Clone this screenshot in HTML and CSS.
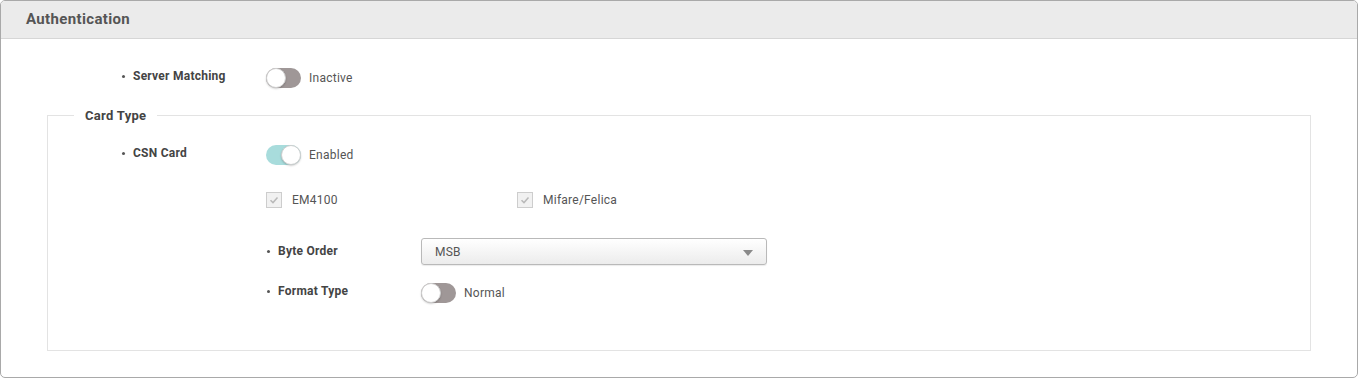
FILE: index.html
```html
<!DOCTYPE html>
<html>
<head>
<meta charset="utf-8">
<link rel="stylesheet" href="styles.css">
</head>
<body>
<div class="panel">
  <div class="panel-head">Authentication</div>
  <div class="panel-body">
    <div class="row row-top">
      <span class="label">Server Matching</span>
      <span class="switch off"><span class="knob"></span></span>
      <span class="val">Inactive</span>
    </div>
    <fieldset class="group">
      <legend>Card Type</legend>
      <div class="row row-csn">
        <span class="label">CSN Card</span>
        <span class="switch on"><span class="knob"></span></span>
        <span class="val">Enabled</span>
      </div>
      <div class="checks">
        <span class="check"><span class="box"><svg width="14" height="14" viewBox="0 0 14 14"><polyline points="3.5,7.2 6,9.6 10.5,4.6" fill="none" stroke="#b9b9b9" stroke-width="1.5"/></svg></span><span class="val">EM4100</span></span>
        <span class="check"><span class="box"><svg width="14" height="14" viewBox="0 0 14 14"><polyline points="3.5,7.2 6,9.6 10.5,4.6" fill="none" stroke="#b9b9b9" stroke-width="1.5"/></svg></span><span class="val">Mifare/Felica</span></span>
      </div>
      <div class="sub">
        <div class="subrow subrow-select">
          <span class="label sublabel">Byte Order</span>
          <span class="select"><span class="sel-text">MSB</span><span class="arrow"></span></span>
        </div>
        <div class="subrow subrow-format">
          <span class="label sublabel">Format Type</span>
          <span class="switch off"><span class="knob"></span></span>
          <span class="val">Normal</span>
        </div>
      </div>
    </fieldset>
  </div>
</div>
</body>
</html>
```
FILE: styles.css
```css
* { box-sizing: border-box; }
html, body { margin: 0; padding: 0; background: #fff; }
body { font-family: Roboto, "Liberation Sans", sans-serif; }

.panel {
  width: 1358px;
  border: 1px solid #a9a9a9;
  border-radius: 5px;
  overflow: hidden;
  background: #fff;
}
.panel-head {
  height: 38px;
  line-height: 36px;
  padding-left: 25px;
  background: #ebebeb;
  border-bottom: 1px solid #d6d6d6;
  font-size: 15px;
  font-weight: 700;
  letter-spacing: 0.35px;
  color: #555;
}
.panel-body {
  padding: 29px 46px 26px 46px;
}

.row { display: flex; align-items: flex-start; }
.row-top { margin-left: 74px; }
.label {
  display: flex;
  align-items: center;
  width: 145px;
  flex: none;
  font-size: 12px;
  font-weight: 700;
  line-height: 17px;
  letter-spacing: 0.25px;
  color: #444;
}
.label::before {
  content: "";
  width: 3px;
  height: 3px;
  border-radius: 50%;
  background: #555;
  margin: 0 8px 0 1px;
  flex: none;
}
.sublabel { width: 155px; }

.switch {
  position: relative;
  display: block;
  width: 35px;
  height: 20px;
  border-radius: 10px;
  background: #9f9797;
  flex: none;
}
.switch.on { background: #a8dcdc; }
.knob {
  position: absolute;
  top: 0;
  left: 0;
  width: 20px;
  height: 20px;
  border-radius: 50%;
  background: #fff;
  border: 1px solid #cfcfcf;
  box-shadow: 0 1px 2px rgba(0,0,0,0.2);
}
.switch.on .knob { left: 15px; }

.val {
  font-size: 12px;
  line-height: 20px;
  letter-spacing: 0.25px;
  color: #555;
  margin-left: 8px;
}

.group {
  margin: 19px 0 0 0;
  padding: 21px 0 47px 0;
  border: 1px solid #e3e3e3;
  min-width: 0;
}
.group legend {
  margin-left: 26px;
  padding: 0 11px;
  font-size: 13px;
  font-weight: 700;
  line-height: 17px;
  letter-spacing: 0.3px;
  color: #444;
}
.row-csn { margin-left: 73px; }

.checks {
  display: flex;
  margin: 27px 0 0 218px;
}
.check {
  display: flex;
  align-items: center;
  width: 251px;
  height: 16px;
}
.check .val { margin-left: 10px; line-height: 16px; }
.box {
  width: 16px;
  height: 16px;
  border: 1px solid #cdcdcd;
  background: #f1f1f1;
  display: flex;
  align-items: center;
  justify-content: center;
  flex: none;
}
.box svg { display: block; }

.sub { margin: 30px 0 0 218px; }
.subrow { display: flex; align-items: center; }
.subrow-format { margin-top: 18px; align-items: flex-start; }

.select {
  display: flex;
  align-items: center;
  justify-content: space-between;
  width: 346px;
  height: 27px;
  padding: 0 13px 0 13px;
  border: 1px solid #b9b9b9;
  border-radius: 3px;
  background: linear-gradient(#ffffff, #ececec);
  box-shadow: 0 1px 1px rgba(0,0,0,0.08);
}
.sel-text { font-size: 12px; letter-spacing: 0.25px; color: #555; }
.arrow {
  width: 0;
  height: 0;
  border-left: 5px solid transparent;
  border-right: 5px solid transparent;
  border-top: 6px solid #8a8a8a;
  margin-top: 2px;
}
```
